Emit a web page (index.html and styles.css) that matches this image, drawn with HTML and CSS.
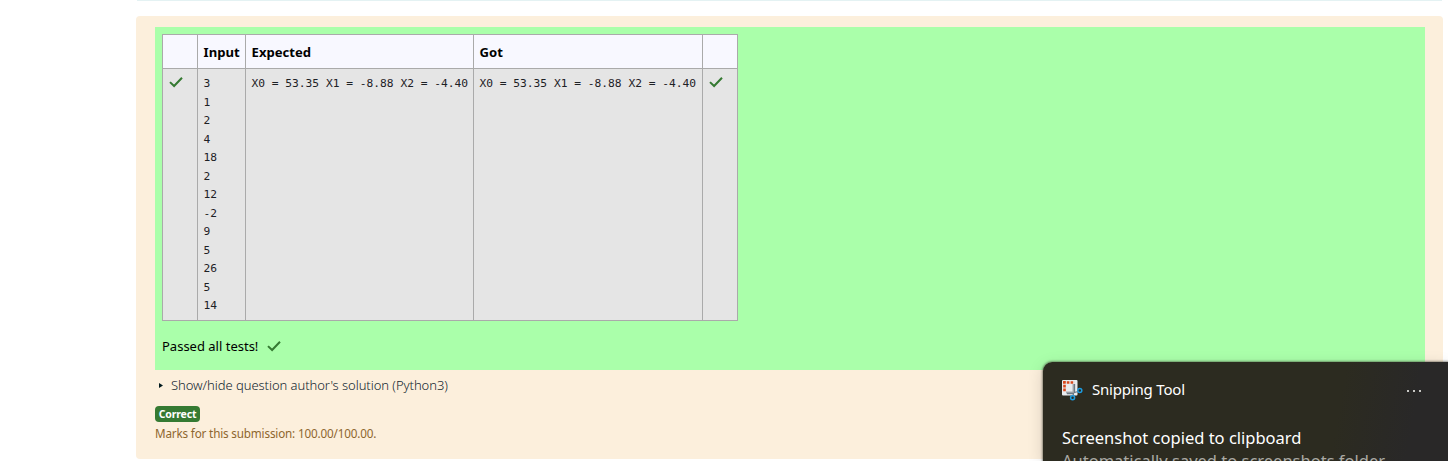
FILE: index.html
```html
<!DOCTYPE html>
<html lang="en">
<head>
<meta charset="utf-8">
<title>Question feedback</title>
<link rel="stylesheet" href="styles.css">
</head>
<body>
<div class="formulation"></div>
<main class="outcome">
  <section class="results">
    <table class="tests">
      <colgroup><col class="c-mark"><col class="c-input"><col class="c-expected"><col class="c-got"><col class="c-mark"></colgroup>
      <thead>
        <tr><th></th><th>Input</th><th>Expected</th><th>Got</th><th></th></tr>
      </thead>
      <tbody>
        <tr>
          <td><svg class="check" viewBox="0 0 14 12"><path d="M1 6.1 5.1 10 13 1.8"/></svg></td>
          <td><pre>3
1
2
4
18
2
12
-2
9
5
26
5
14</pre></td>
          <td><pre>X0 = 53.35 X1 = -8.88 X2 = -4.40</pre></td>
          <td><pre>X0 = 53.35 X1 = -8.88 X2 = -4.40</pre></td>
          <td><svg class="check" viewBox="0 0 14 12"><path d="M1 6.1 5.1 10 13 1.8"/></svg></td>
        </tr>
      </tbody>
    </table>
    <p class="passed"><span>Passed all tests!</span><svg class="check" viewBox="0 0 14 12"><path d="M1 6.1 5.1 10 13 1.8"/></svg></p>
  </section>
  <div class="solution"><svg class="arrow" viewBox="0 0 5 6"><path d="M0 0 5 3 0 6Z"/></svg><span>Show/hide question author's solution (Python3)</span></div>
  <div class="badge">Correct</div>
  <div class="marks">Marks for this submission: 100.00/100.00.</div>
</main>
<aside class="toast">
  <header class="toast-head">
    <svg class="snip" viewBox="0 0 21 21">
      <rect x="0" y="0" width="15.5" height="15.5" rx="1" fill="#e9ecef"/>
      <path d="M1 2.5H12.5M2.5 1V12" fill="none" stroke="#d9481c" stroke-width="2.6" stroke-dasharray="2.6 1.2"/>
      <path d="M11.5 4V12.5M4 12.5H12" fill="none" stroke="#a4aab0" stroke-width="2"/>
      <path d="M12.5 4V12.5L16 11.5M5 13.5H11.5L11 16" fill="none" stroke="#6c7883" stroke-width="1.3"/>
      <g fill="none" stroke="#1c9be0" stroke-width="1.5"><circle cx="17.8" cy="10.6" r="2"/><circle cx="10.6" cy="17.7" r="2"/></g>
    </svg>
    <span class="app">Snipping Tool</span>
    <span class="dots"><i></i><i></i><i></i></span>
  </header>
  <div class="toast-title">Screenshot copied to clipboard</div>
  <div class="toast-text">Automatically saved to screenshots folder</div>
</aside>
</body>
</html>
```
FILE: styles.css
```css
* { box-sizing: border-box; }
html, body { height: 100%; overflow: hidden; }
body { margin: 0; background: #fff; color: #000; font-family: "Noto Sans", "Open Sans", sans-serif; }
.formulation { height: 1px; margin: 0 6px 0 137px; background: #e4f2f3; }
.outcome { width: 1307px; height: 443px; margin: 15px 0 0 136px; padding: 11px 18px 0 19px; border-radius: 4px; background: #fcefdc; }
.results { height: 343px; padding: 7px; background: #aaffaa; }
.tests { width: 576px; table-layout: fixed; border-collapse: collapse; }
.c-mark { width: 35px; }
.c-input { width: 48px; }
.c-expected { width: 228px; }
.c-got { width: 229px; }
.tests th, .tests td { border: 1px solid #aaa; text-align: left; white-space: nowrap; }
.tests th { height: 34px; padding: 0 0 0 5.6px; background: #f8f8ff; font-size: 13.1px; line-height: 20px; font-weight: 700; }
.tests td { height: 252px; padding: 6px 0 0 5.4px; background: #e5e5e5; vertical-align: top; }
.tests td .check { margin: 1px 0 0 .4px; }
pre { margin: 0; color: #1d2125; font: 11.26px/18.5px "DejaVu Sans Mono", monospace; }
.check { display: block; width: 14px; height: 12px; fill: none; stroke: #357a32; stroke-width: 2; }
.passed { display: flex; align-items: center; height: 20px; margin: 15px 0 0; font-size: 13px; white-space: nowrap; }
.passed span { width: 105px; }
.passed .check { margin-top: -1px; }
.solution { display: flex; align-items: center; height: 20px; margin-top: 5px; padding-left: 4px; color: #10242f; font-size: 13px; font-weight: 300; letter-spacing: -.05px; white-space: nowrap; }
.arrow { width: 4px; height: 5px; margin-right: 8px; fill: #001a1e; }
.badge { width: 45px; height: 16px; margin-top: 11px; border-radius: 4px; background: #357a32; color: #fff; font-size: 10.5px; font-weight: 700; letter-spacing: -.15px; line-height: 16px; text-align: center; }
.marks { height: 18px; margin-top: 2px; color: #8e662e; font-size: 11.7px; letter-spacing: -.17px; line-height: 18px; white-space: nowrap; }
.toast { position: absolute; left: 1043px; top: 362px; width: 405px; height: 99px; padding: 18px 27px 0 19px; overflow: hidden; border-radius: 9px 0 0 0; background: linear-gradient(100deg, #2c2b20 0 72%, #292828 90%); box-shadow: 0 0 2px 1px rgba(60, 60, 50, .5), 0 4px 16px rgba(0, 0, 0, .15); color: #fff; white-space: nowrap; }
.toast-head { display: flex; align-items: center; height: 20px; }
.snip { width: 21px; height: 21px; margin-right: 9px; }
.app { margin-top: -2px; font-size: 15px; letter-spacing: -.2px; }
.dots { display: flex; gap: 4px; margin: 1px 0 0 auto; }
.dots i { width: 2px; height: 2px; background: #c8c8c4; }
.toast-title { margin-top: 27px; font-size: 16.5px; line-height: 22px; }
.toast-text { margin-top: 1px; color: #aaa9a4; font-size: 16.5px; line-height: 22px; }
```
